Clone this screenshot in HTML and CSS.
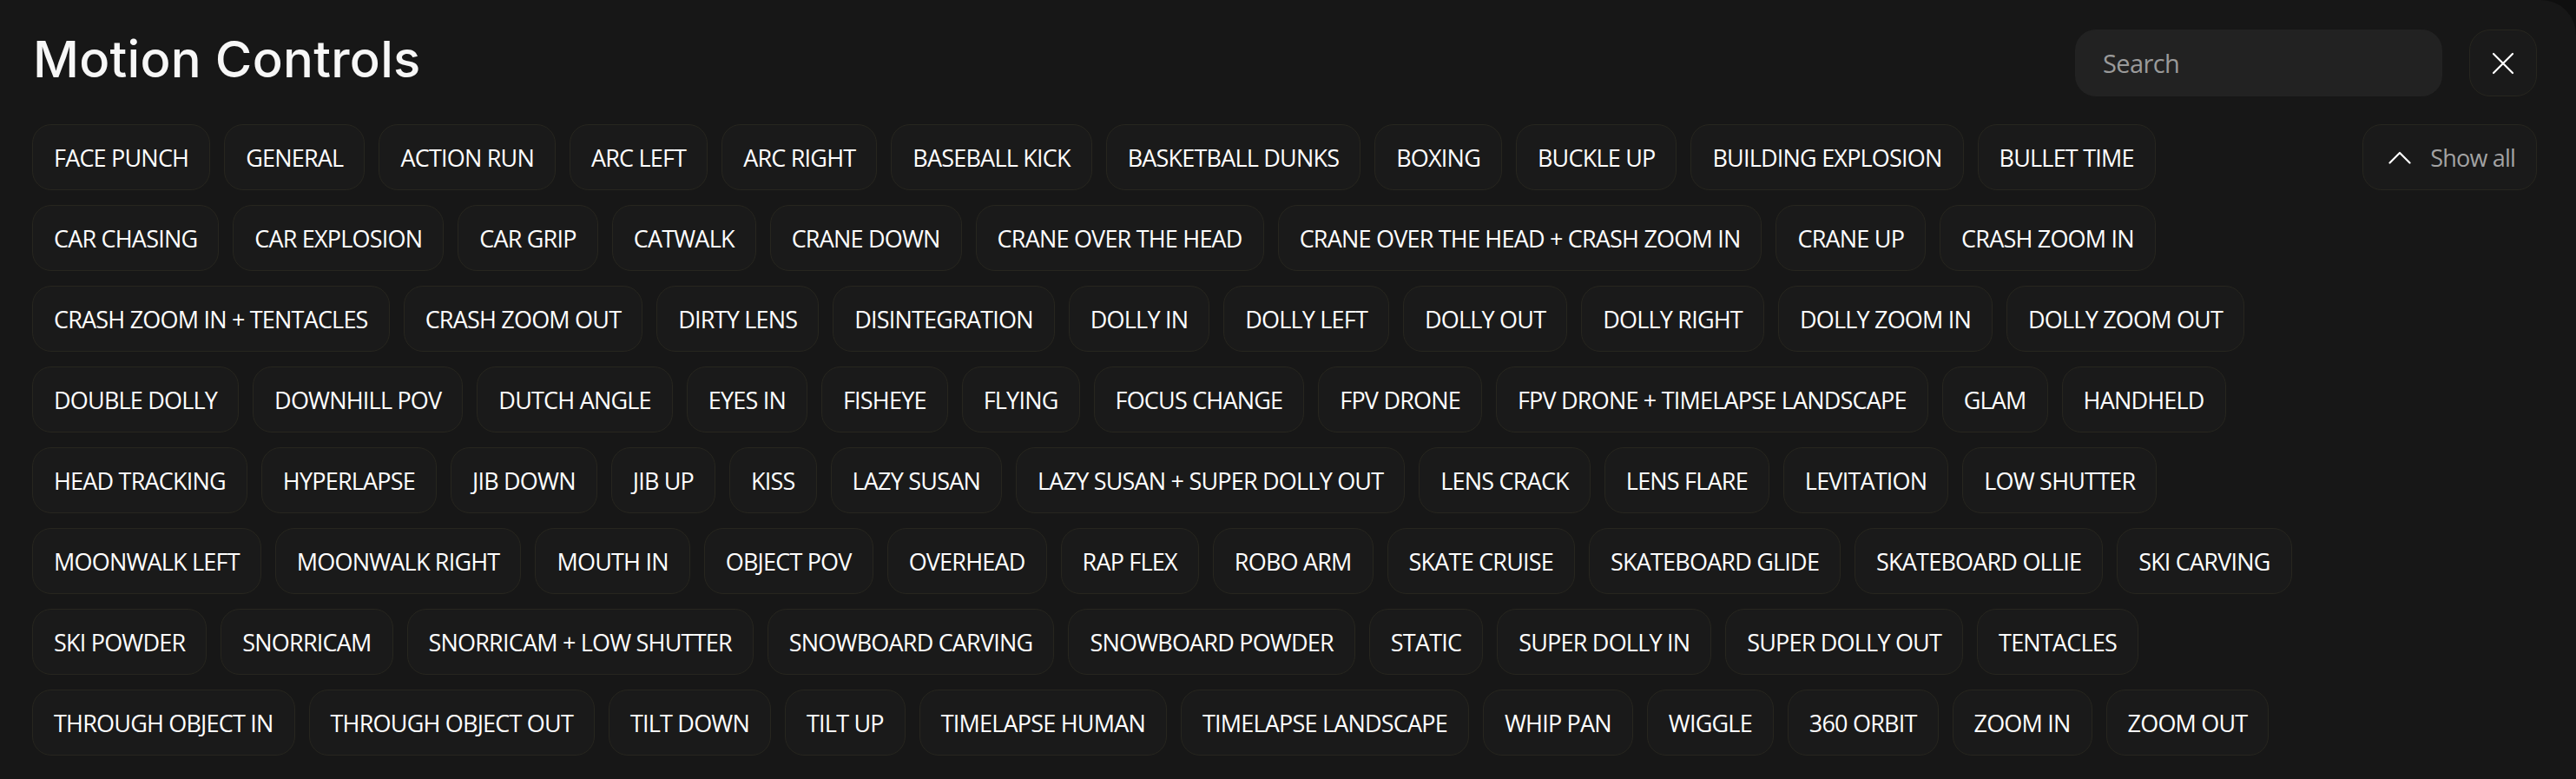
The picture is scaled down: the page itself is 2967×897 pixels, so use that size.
FILE: index.html
```html
<!DOCTYPE html>
<html lang="en">
<head>
    <meta charset="UTF-8">
    <meta name="viewport" content="width=device-width, initial-scale=1.0">
    <title>Motion Controls</title>
    <link rel="stylesheet" href="styles.css">
</head>
<body>
    <div class="panel">
        <header class="panel-head">
            <h1>Motion Controls</h1>
            <div class="head-actions">
                <input type="text" class="search" placeholder="Search">
                <button class="icon-btn" aria-label="Close">
                    <svg width="26" height="26" viewBox="0 0 26 26" fill="none" stroke="#ffffff" stroke-width="2.2" stroke-linecap="round">
                        <path d="M2 2 L24 24 M24 2 L2 24"/>
                    </svg>
                </button>
            </div>
        </header>
        <div class="panel-body">
            <div class="tags">
                <button class="tag">FACE PUNCH</button>
                <button class="tag">GENERAL</button>
                <button class="tag">ACTION RUN</button>
                <button class="tag">ARC LEFT</button>
                <button class="tag">ARC RIGHT</button>
                <button class="tag">BASEBALL KICK</button>
                <button class="tag">BASKETBALL DUNKS</button>
                <button class="tag">BOXING</button>
                <button class="tag">BUCKLE UP</button>
                <button class="tag">BUILDING EXPLOSION</button>
                <button class="tag">BULLET TIME</button>
                <button class="tag">CAR CHASING</button>
                <button class="tag">CAR EXPLOSION</button>
                <button class="tag">CAR GRIP</button>
                <button class="tag">CATWALK</button>
                <button class="tag">CRANE DOWN</button>
                <button class="tag">CRANE OVER THE HEAD</button>
                <button class="tag">CRANE OVER THE HEAD + CRASH ZOOM IN</button>
                <button class="tag">CRANE UP</button>
                <button class="tag">CRASH ZOOM IN</button>
                <button class="tag">CRASH ZOOM IN + TENTACLES</button>
                <button class="tag">CRASH ZOOM OUT</button>
                <button class="tag">DIRTY LENS</button>
                <button class="tag">DISINTEGRATION</button>
                <button class="tag">DOLLY IN</button>
                <button class="tag">DOLLY LEFT</button>
                <button class="tag">DOLLY OUT</button>
                <button class="tag">DOLLY RIGHT</button>
                <button class="tag">DOLLY ZOOM IN</button>
                <button class="tag">DOLLY ZOOM OUT</button>
                <button class="tag">DOUBLE DOLLY</button>
                <button class="tag">DOWNHILL POV</button>
                <button class="tag">DUTCH ANGLE</button>
                <button class="tag">EYES IN</button>
                <button class="tag">FISHEYE</button>
                <button class="tag">FLYING</button>
                <button class="tag">FOCUS CHANGE</button>
                <button class="tag">FPV DRONE</button>
                <button class="tag">FPV DRONE + TIMELAPSE LANDSCAPE</button>
                <button class="tag">GLAM</button>
                <button class="tag">HANDHELD</button>
                <button class="tag">HEAD TRACKING</button>
                <button class="tag">HYPERLAPSE</button>
                <button class="tag">JIB DOWN</button>
                <button class="tag">JIB UP</button>
                <button class="tag">KISS</button>
                <button class="tag">LAZY SUSAN</button>
                <button class="tag">LAZY SUSAN + SUPER DOLLY OUT</button>
                <button class="tag">LENS CRACK</button>
                <button class="tag">LENS FLARE</button>
                <button class="tag">LEVITATION</button>
                <button class="tag">LOW SHUTTER</button>
                <button class="tag">MOONWALK LEFT</button>
                <button class="tag">MOONWALK RIGHT</button>
                <button class="tag">MOUTH IN</button>
                <button class="tag">OBJECT POV</button>
                <button class="tag">OVERHEAD</button>
                <button class="tag">RAP FLEX</button>
                <button class="tag">ROBO ARM</button>
                <button class="tag">SKATE CRUISE</button>
                <button class="tag">SKATEBOARD GLIDE</button>
                <button class="tag">SKATEBOARD OLLIE</button>
                <button class="tag">SKI CARVING</button>
                <button class="tag">SKI POWDER</button>
                <button class="tag">SNORRICAM</button>
                <button class="tag">SNORRICAM + LOW SHUTTER</button>
                <button class="tag">SNOWBOARD CARVING</button>
                <button class="tag">SNOWBOARD POWDER</button>
                <button class="tag">STATIC</button>
                <button class="tag">SUPER DOLLY IN</button>
                <button class="tag">SUPER DOLLY OUT</button>
                <button class="tag">TENTACLES</button>
                <button class="tag">THROUGH OBJECT IN</button>
                <button class="tag">THROUGH OBJECT OUT</button>
                <button class="tag">TILT DOWN</button>
                <button class="tag">TILT UP</button>
                <button class="tag">TIMELAPSE HUMAN</button>
                <button class="tag">TIMELAPSE LANDSCAPE</button>
                <button class="tag">WHIP PAN</button>
                <button class="tag">WIGGLE</button>
                <button class="tag">360 ORBIT</button>
                <button class="tag">ZOOM IN</button>
                <button class="tag">ZOOM OUT</button>
            </div>
            <button class="show-all">
                <svg width="26" height="15" viewBox="0 0 26 15" fill="none" stroke="#ffffff" stroke-width="2.2" stroke-linecap="round" stroke-linejoin="round">
                    <path d="M1.5 13.5 L13 2 L24.5 13.5"/>
                </svg>
                <span>Show all</span>
            </button>
        </div>
    </div>
</body>
</html>
```

FILE: styles.css
```css
* {
    margin: 0;
    padding: 0;
    box-sizing: border-box;
}

body {
    background-color: #0f0f0f;
    color: #ffffff;
    font-family: 'Open Sans', 'Noto Sans', sans-serif;
    height: 100vh;
    overflow: hidden;
}

.panel {
    height: 100%;
    background-color: #171717;
    border-top-right-radius: 40px;
    padding: 34px 45px 0 37px;
}

.panel-head {
    display: flex;
    align-items: center;
    justify-content: space-between;
    height: 77px;
    margin-bottom: 32px;
}

h1 {
    font-family: 'Inter', sans-serif;
    font-size: 58px;
    font-weight: 500;
    letter-spacing: 0.3px;
    color: #f7f7f7;
    padding-left: 1px;
    margin-top: -10px;
}

.head-actions {
    display: flex;
    gap: 31px;
    height: 100%;
}

.search {
    width: 423px;
    height: 100%;
    border: none;
    border-radius: 24px;
    background-color: #222222;
    color: #ffffff;
    font-family: inherit;
    font-size: 29px;
    letter-spacing: -0.6px;
    padding: 0 32px;
}

.search::placeholder {
    color: #9a9a9a;
}

.search:focus {
    outline: none;
}

.icon-btn {
    width: 78px;
    height: 100%;
    display: flex;
    align-items: center;
    justify-content: center;
    background-color: #1a1a1a;
    border: 1px solid #27261f;
    border-radius: 24px;
    cursor: pointer;
}

.panel-body {
    display: flex;
    align-items: flex-start;
    gap: 60px;
}

.tags {
    flex: 1;
    display: flex;
    flex-wrap: wrap;
    gap: 17px 16px;
}

.tag,
.show-all {
    height: 76px;
    padding: 0 24px;
    background-color: #1a1a1a;
    border: 1px solid #27261f;
    border-radius: 22px;
    color: #ffffff;
    font-family: inherit;
    font-size: 27px;
    letter-spacing: -0.8px;
    white-space: nowrap;
    cursor: pointer;
}

.show-all {
    display: flex;
    align-items: center;
    gap: 22px;
    padding: 0 24px 0 29px;
    color: #a3a3a3;
}
```
